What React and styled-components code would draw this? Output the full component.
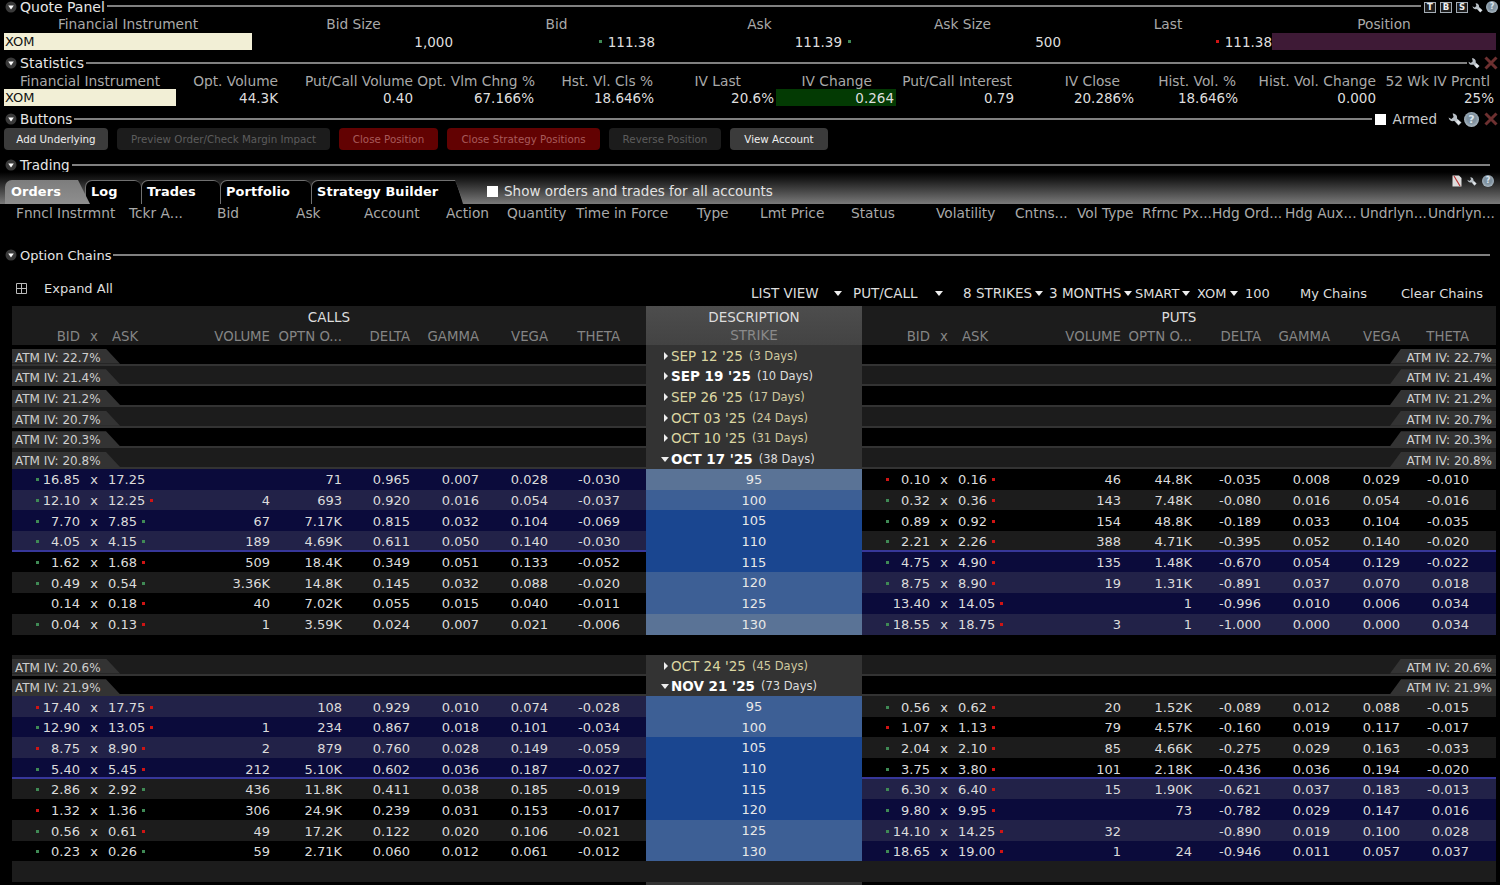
import React from "react";
import styled, { createGlobalStyle } from "styled-components";

const GlobalStyle = createGlobalStyle`
  html, body {
    margin: 0;
    background: #000;
  }
  body {
    font-family: "DejaVu Sans", "Liberation Sans", sans-serif;
    color: #ddd;
  }
`;

const Page = styled.div`
  width: 1500px;
  height: 885px;
  overflow: hidden;
  background: #000;
`;

/* section headers */
const SectionHead = styled.div`
  display: flex;
  align-items: center;
  height: 14px;
  margin-top: ${(p) => p.$mt || 0}px;
  padding: 0 2px 0 5px;
`;

const SectionTitle = styled.span`
  font-size: ${(p) => p.$fs || 14}px;
  color: #e6e6e6;
  margin-left: 3px;
  white-space: nowrap;
`;

const HeadLine = styled.div`
  flex: 1;
  height: 2px;
  margin-left: 2px;
  margin-right: ${(p) => p.$mr || 0}px;
  margin-bottom: ${(p) => p.$up || 0}px;
  background: #808080;
`;

const HeadIcons = styled.div`
  display: flex;
  align-items: center;
  gap: ${(p) => p.$gap ?? 4}px;
`;

const LetterBox = styled.span`
  width: 12px;
  height: 11px;
  margin-right: 4px;
  font-size: 8.5px;
  font-weight: 700;
  line-height: 9px;
  text-align: center;
  color: #eee;
  background: #1d1d1d;
  border: 1px solid #a4adb6;
  box-sizing: border-box;
`;

const HelpDot = styled.span`
  flex: none;
  width: ${(p) => p.$size || 13}px;
  height: ${(p) => p.$size || 13}px;
  margin-left: ${(p) => p.$ml || 0}px;
  border-radius: 50%;
  background: radial-gradient(circle at 50% 45%, #7f919f 40%, #b4c0c9 80%);
  color: #dbe5ee;
  font-size: ${(p) => Math.round((p.$size || 13) * 0.7)}px;
  font-weight: 700;
  line-height: ${(p) => p.$size || 13}px;
  text-align: center;
`;

const Disclosure = () => (
  <svg width="12" height="12" viewBox="0 0 12 12">
    <circle cx="6" cy="6" r="5.5" fill="#3a3a3a" />
    <path d="M3.2 4.4h5.6L6 8.6z" fill="#fff" />
  </svg>
);

const Wrench = ({ size = 12 }) => (
  <svg width={size} height={size} viewBox="0 0 14 14">
    <path
      d="M13.5 10.5L10.5 13.5L6.2 8.8C4 9.8 1.2 8.8 .6 5.4L3.4 7L5.6 5L4.6 1.6C7.8 1.6 9.6 4 9 6.4z"
      fill="#b9c0c6"
    />
    <path d="M12.6 10.6L10.6 12.6L8 9.8L9.9 7.9z" fill="#e4e8ec" />
  </svg>
);

const CloseX = () => (
  <svg width="14" height="14" viewBox="0 0 14 14">
    <path d="M1.5 1.5L12.5 12.5M12.5 1.5L1.5 12.5" stroke="#6d3030" strokeWidth="3" />
  </svg>
);

const PageIcon = () => (
  <svg width="10" height="12" viewBox="0 0 10 12">
    <path d="M0.5 0.5H7L9.5 3V11.5H0.5z" fill="#ddd" />
    <path d="M2 1L8 11" stroke="#b33" strokeWidth="1.2" />
  </svg>
);

/* quote + statistics tables */
const LabelRow = styled.div`
  display: grid;
  grid-template-columns: ${(p) => p.$cols};
  height: 19px;
  box-sizing: border-box;
  padding: ${(p) => p.$pt || 0}px 0 0 4px;
  align-items: center;
  font-size: 13.75px;
  color: #a9a9a9;
  white-space: nowrap;
`;

const ValueRow = styled.div`
  display: grid;
  grid-template-columns: ${(p) => p.$cols};
  height: 17px;
  padding-left: 4px;
  font-size: 13.5px;
  color: #dedede;
  white-space: nowrap;
`;

const Label = styled.span`
  text-align: ${(p) => (p.$right === undefined ? "center" : "right")};
  padding-right: ${(p) => p.$right || 0}px;
`;

const SymbolCell = styled.div`
  background: #f2efd6;
  color: #111;
  line-height: 17px;
  padding-left: 1px;
  font-size: 13px;
`;

const NumCell = styled.div`
  display: flex;
  justify-content: flex-end;
  align-items: center;
  gap: ${(p) => p.$gap || 6}px;
  padding-right: ${(p) => p.$pr ?? 2}px;
  background: ${(p) => p.$bg || "transparent"};
`;

const Tick = styled.i`
  display: block;
  flex: none;
  width: 3px;
  height: 3px;
  background: ${(p) => (p.$c === "r" ? "#d01414" : "#3f8a55")};
`;

/* buttons */
const ButtonRow = styled.div`
  display: flex;
  gap: 9px;
  height: 22px;
  margin-top: 2px;
  padding-left: 4px;
`;

const Btn = styled.button`
  width: ${(p) => p.$w}px;
  padding: 0;
  border: none;
  border-radius: 4px;
  font-family: inherit;
  font-size: 10.3px;
  background: ${(p) => (p.$kind === "red" ? "#620202" : p.$kind === "off" ? "#1c1c1c" : "#3b3b3b")};
  color: ${(p) => (p.$kind === "red" ? "#a85a5a" : p.$kind === "off" ? "#5c5c5c" : "#efefef")};
`;

const Armed = styled.label`
  display: flex;
  align-items: center;
  gap: 6px;
  margin-right: 11px;
  font-size: 13.5px;
  color: #ccc;
`;

const WhiteBox = styled.span`
  display: block;
  flex: none;
  width: 11px;
  height: 11px;
  background: #fff;
`;

/* trading tabs */
const TabBar = styled.div`
  position: relative;
  display: flex;
  align-items: flex-end;
  height: 32px;
  padding-left: 5px;
  background: linear-gradient(180deg, #000 0%, #161616 20%, #7a7a7a 100%);
`;

const Tab = styled.div`
  position: relative;
  width: ${(p) => p.$w}px;
  height: 24px;
  margin-right: ${(p) => p.$overlap || 0}px;
  padding-left: 6px;
  box-sizing: border-box;
  font-size: 12.9px;
  font-weight: 700;
  line-height: 23px;
  letter-spacing: 0.1px;
  color: #fff;
  background: ${(p) => (p.$active ? "linear-gradient(180deg, #7d7d7d, #8e8e8e)" : "#707070")};
  border-radius: 7px 7px 0 0;
  clip-path: ${(p) => p.$shape || "none"};
  z-index: ${(p) => (p.$active ? 2 : 1)};
  white-space: nowrap;

  span {
    position: relative;
    z-index: 1;
  }

  &::before {
    content: "";
    position: absolute;
    inset: 1px ${(p) => (p.$shape ? 1 : 0)}px 0 1px;
    background: ${(p) => (p.$active ? "transparent" : "#000")};
    border-radius: 6px 6px 0 0;
    clip-path: ${(p) => p.$shape || "none"};
  }
`;

const ShowOrders = styled.label`
  display: flex;
  align-items: center;
  gap: 6px;
  margin-left: 23px;
  height: 24px;
  padding-bottom: 2px;
  box-sizing: border-box;
  font-size: 13.5px;
  color: #e2e2e2;
`;

const TabIcons = styled.div`
  position: absolute;
  right: 6px;
  top: 3px;
  display: flex;
  align-items: center;
  gap: 5px;
`;

const OrderColumns = styled.div`
  display: grid;
  grid-template-columns: ${(p) => p.$cols};
  height: 18px;
  padding-left: 16px;
  align-items: center;
  font-size: 13.75px;
  color: #a9a9a9;
  white-space: nowrap;
`;

/* option chain toolbar */
const ChainBar = styled.div`
  display: flex;
  height: 32px;
  margin-top: 12px;
`;

const ExpandAll = styled.div`
  display: flex;
  align-items: center;
  gap: 17px;
  height: 28px;
  padding-left: 16px;
  font-size: 13px;
  color: #ddd;
`;

const ChainControls = styled.div`
  display: flex;
  align-items: center;
  margin-left: auto;
  height: 24px;
  margin-top: 7px;
`;

const ChainItem = styled.div`
  display: flex;
  align-items: center;
  gap: ${(p) => p.$gap || 3}px;
  width: ${(p) => p.$w}px;
  font-size: ${(p) => p.$fs || 13.5}px;
  color: #ddd;
  white-space: nowrap;
`;

const Caret = styled.i`
  width: 0;
  height: 0;
  border-left: 4px solid transparent;
  border-right: 4px solid transparent;
  border-top: 5px solid #eee;
`;

/* chain table */
const Row = styled.div`
  display: grid;
  grid-template-columns: 634px 216px 634px;
  margin-left: 12px;
  width: 1484px;
  height: ${(p) => p.$h || 20.67}px;
  box-sizing: border-box;
`;

const HeaderSide = styled.div`
  background: #1c1c1c;
  display: flex;
  flex-direction: column;
`;

const HeaderTitle = styled.div`
  height: 21px;
  line-height: 23px;
  text-align: center;
  font-size: 13.5px;
  color: #ddd;
`;

const HeaderDesc = styled.div`
  background: linear-gradient(180deg, #4d4d4d, #434343);
  text-align: center;
  font-size: 13.5px;
  color: #ddd;
`;

const StrikeLabel = styled.div`
  color: #8a8a8a;
  line-height: 16px;
`;

const Cols = styled.div`
  display: grid;
  grid-template-columns: ${(p) => p.$cols};
  align-items: center;
  height: 100%;
  padding-top: ${(p) => p.$pt || 0}px;
  font-size: ${(p) => p.$fs || 13}px;
  color: ${(p) => p.$color || "#dcdcdc"};
  white-space: nowrap;
  box-sizing: border-box;
  background: ${(p) => p.$bg || "transparent"};
  box-shadow: ${(p) => (p.$atm ? "inset 0 -2px 0 #37379a" : "none")};
`;

const Head = styled.span`
  text-align: ${(p) => p.$align || "right"};
  padding-left: ${(p) => p.$pl || 0}px;
`;

const BidCell = styled.div`
  display: flex;
  justify-content: space-between;
  align-items: center;
  padding-left: 24px;
`;

const AskCell = styled.div`
  display: flex;
  align-items: center;
  gap: 5px;
`;

const XCell = styled.span`
  text-align: center;
`;

const Num = styled.span`
  text-align: right;
`;

const AtmSide = styled.div`
  display: flex;
  align-items: flex-end;
  justify-content: ${(p) => (p.$right ? "flex-end" : "flex-start")};
  height: 100%;
  box-sizing: border-box;
  background: ${(p) => p.$bg};
  border-bottom: 2px solid #333;
`;

const AtmTag = styled.div`
  width: ${(p) => (p.$right ? 106 : 108)}px;
  height: 15px;
  box-sizing: border-box;
  padding: ${(p) => (p.$right ? "0 4px 0 0" : "0 0 0 3px")};
  background: #333;
  font-size: 12px;
  line-height: 18px;
  color: #cfcfcf;
  text-align: ${(p) => (p.$right ? "right" : "left")};
  white-space: nowrap;
  clip-path: ${(p) =>
    p.$right
      ? "polygon(11px 0, 100% 0, 100% 100%, 0 100%)"
      : "polygon(0 0, 94px 0, 100% 100%, 0 100%)"};
`;

const ExpiryCell = styled.div`
  display: flex;
  align-items: center;
  height: 100%;
  padding: 1px 0 0 ${(p) => (p.$open ? 15 : 18)}px;
  box-sizing: border-box;
  background: #333;
  color: ${(p) => (p.$bold ? "#fff" : "#dcd7a2")};
  font-size: 13.5px;
  font-weight: ${(p) => (p.$bold ? 700 : 400)};
  white-space: nowrap;

  small {
    margin-left: 6px;
    font-size: 11.5px;
    font-weight: 400;
    color: ${(p) => (p.$bold ? "#ddd" : "#cfc9a0")};
  }
`;

const ExpiryArrow = styled.i`
  flex: none;
  width: 0;
  height: 0;
  margin-right: ${(p) => (p.$open ? 2 : 3)}px;
  ${(p) =>
    p.$open
      ? "border-left: 4px solid transparent; border-right: 4px solid transparent; border-top: 5px solid #eee;"
      : "border-top: 4px solid transparent; border-bottom: 4px solid transparent; border-left: 4px solid #eee;"}
`;

const STRIKE_BG = { far: "#5a7396", mid: "#3d5f95", deep: "#1a4690" };
const SIDE_BG = { navy: "#0b0b3b", navy2: "#222248", black: "#000", gray: "#1c1c1c" };

const StrikeCell = styled.div`
  height: 100%;
  line-height: 21px;
  text-align: center;
  font-size: 13px;
  color: #e8e8e8;
  background: ${(p) => STRIKE_BG[p.$tone]};
`;

const BlankSide = styled.div`
  background: ${(p) => p.$bg || "transparent"};
`;

const QUOTE_COLS = "248px 203px 203px 203px 203px 208px 224px";
const STAT_COLS = "172px 104px 135px 121px 120px 120px 120px 120px 120px 104px 138px 118px";
const ORDER_COLS = "113px 88px 79px 68px 82px 61px 69px 121px 63px 91px 85px 79px 62px 65px 70px 73px 75px 68px 72px";
const CALL_COLS = "68px 28px 62px 100px 72px 68px 69px 69px 72px 26px";
const PUT_COLS = "68px 28px 62px 101px 71px 69px 69px 70px 69px 27px";

const STATS = [
  ["Opt. Volume", 2, "44.3K"],
  ["Put/Call Volume", 2, "0.40"],
  ["Opt. Vlm Chng %", 1, "67.166%"],
  ["Hst. Vl. Cls %", 3, "18.646%"],
  ["IV Last", 35, "20.6%"],
  ["IV Change", 24, "0.264"],
  ["Put/Call Interest", 4, "0.79"],
  ["IV Close", 16, "20.286%"],
  ["Hist. Vol. %", 4, "18.646%"],
  ["Hist. Vol. Change", 2, "0.000"],
  ["52 Wk IV Prcntl", 6, "25%"],
];

const ORDER_LABELS = [
  "Fnncl Instrmnt", "Tckr A...", "Bid", "Ask", "Account", "Action", "Quantity", "Time in Force", "Type",
  "Lmt Price", "Status", "Volatility", "Cntns...", "Vol Type", "Rfrnc Px...", "Hdg Ord...", "Hdg Aux...",
  "Undrlyn...", "Undrlyn...",
];

const expiry = (date, days, iv, bold, open) => ({ date, days, iv, bold, open });

const FIRST_EXPIRIES = [
  expiry("SEP 12 '25", "(3 Days)", "22.7%"),
  expiry("SEP 19 '25", "(10 Days)", "21.4%", true),
  expiry("SEP 26 '25", "(17 Days)", "21.2%"),
  expiry("OCT 03 '25", "(24 Days)", "20.7%"),
  expiry("OCT 10 '25", "(31 Days)", "20.3%"),
  expiry("OCT 17 '25", "(38 Days)", "20.8%", true, true),
];

const SECOND_EXPIRIES = [
  expiry("OCT 24 '25", "(45 Days)", "20.6%"),
  expiry("NOV 21 '25", "(73 Days)", "21.9%", true, true),
];

// [bid tick, bid, ask, ask tick, volume, open interest, delta, gamma, vega, theta]
const OCT_ROWS = [
  { strike: 95, tone: "far", call: ["g", "16.85", "17.25", "", "", "71", "0.965", "0.007", "0.028", "-0.030"], put: ["r", "0.10", "0.16", "r", "46", "44.8K", "-0.035", "0.008", "0.029", "-0.010"] },
  { strike: 100, tone: "mid", call: ["g", "12.10", "12.25", "r", "4", "693", "0.920", "0.016", "0.054", "-0.037"], put: ["g", "0.32", "0.36", "r", "143", "7.48K", "-0.080", "0.016", "0.054", "-0.016"] },
  { strike: 105, tone: "deep", call: ["g", "7.70", "7.85", "g", "67", "7.17K", "0.815", "0.032", "0.104", "-0.069"], put: ["g", "0.89", "0.92", "r", "154", "48.8K", "-0.189", "0.033", "0.104", "-0.035"] },
  { strike: 110, tone: "deep", atm: true, call: ["g", "4.05", "4.15", "g", "189", "4.69K", "0.611", "0.050", "0.140", "-0.030"], put: ["g", "2.21", "2.26", "r", "388", "4.71K", "-0.395", "0.052", "0.140", "-0.020"] },
  { strike: 115, tone: "deep", call: ["g", "1.62", "1.68", "r", "509", "18.4K", "0.349", "0.051", "0.133", "-0.052"], put: ["g", "4.75", "4.90", "r", "135", "1.48K", "-0.670", "0.054", "0.129", "-0.022"] },
  { strike: 120, tone: "mid", call: ["g", "0.49", "0.54", "g", "3.36K", "14.8K", "0.145", "0.032", "0.088", "-0.020"], put: ["g", "8.75", "8.90", "r", "19", "1.31K", "-0.891", "0.037", "0.070", "0.018"] },
  { strike: 125, tone: "mid", call: ["", "0.14", "0.18", "r", "40", "7.02K", "0.055", "0.015", "0.040", "-0.011"], put: ["", "13.40", "14.05", "r", "", "1", "-0.996", "0.010", "0.006", "0.034"] },
  { strike: 130, tone: "far", call: ["g", "0.04", "0.13", "r", "1", "3.59K", "0.024", "0.007", "0.021", "-0.006"], put: ["g", "18.55", "18.75", "r", "3", "1", "-1.000", "0.000", "0.000", "0.034"] },
];

const NOV_ROWS = [
  { strike: 95, tone: "mid", call: ["r", "17.40", "17.75", "r", "", "108", "0.929", "0.010", "0.074", "-0.028"], put: ["g", "0.56", "0.62", "r", "20", "1.52K", "-0.089", "0.012", "0.088", "-0.015"] },
  { strike: 100, tone: "mid", call: ["g", "12.90", "13.05", "r", "1", "234", "0.867", "0.018", "0.101", "-0.034"], put: ["r", "1.07", "1.13", "r", "79", "4.57K", "-0.160", "0.019", "0.117", "-0.017"] },
  { strike: 105, tone: "deep", call: ["r", "8.75", "8.90", "r", "2", "879", "0.760", "0.028", "0.149", "-0.059"], put: ["g", "2.04", "2.10", "r", "85", "4.66K", "-0.275", "0.029", "0.163", "-0.033"] },
  { strike: 110, tone: "deep", atm: true, call: ["g", "5.40", "5.45", "r", "212", "5.10K", "0.602", "0.036", "0.187", "-0.027"], put: ["g", "3.75", "3.80", "r", "101", "2.18K", "-0.436", "0.036", "0.194", "-0.020"] },
  { strike: 115, tone: "deep", call: ["g", "2.86", "2.92", "g", "436", "11.8K", "0.411", "0.038", "0.185", "-0.019"], put: ["g", "6.30", "6.40", "r", "15", "1.90K", "-0.621", "0.037", "0.183", "-0.013"] },
  { strike: 120, tone: "deep", call: ["r", "1.32", "1.36", "g", "306", "24.9K", "0.239", "0.031", "0.153", "-0.017"], put: ["g", "9.80", "9.95", "r", "", "73", "-0.782", "0.029", "0.147", "0.016"] },
  { strike: 125, tone: "mid", call: ["g", "0.56", "0.61", "r", "49", "17.2K", "0.122", "0.020", "0.106", "-0.021"], put: ["g", "14.10", "14.25", "r", "32", "", "-0.890", "0.019", "0.100", "0.028"] },
  { strike: 130, tone: "mid", call: ["g", "0.23", "0.26", "g", "59", "2.71K", "0.060", "0.012", "0.061", "-0.012"], put: ["g", "18.65", "19.00", "r", "1", "24", "-0.946", "0.011", "0.057", "0.037"] },
];

const Side = ({ cols, bg, atm, data }) => {
  const [bt, bid, ask, at, ...rest] = data;
  return (
    <Cols $cols={cols} $bg={bg} $atm={atm} $pt={1}>
      <BidCell>
        {bt ? <Tick $c={bt} /> : <span />}
        <span>{bid}</span>
      </BidCell>
      <XCell>x</XCell>
      <AskCell>
        <span>{ask}</span>
        {at && <Tick $c={at} />}
      </AskCell>
      {rest.map((v, i) => (
        <Num key={i}>{v}</Num>
      ))}
    </Cols>
  );
};

const HeaderCols = ({ cols }) => (
  <Cols $cols={cols} $fs={13.3} $color="#858585">
    <Head>BID</Head>
    <XCell>x</XCell>
    <Head $align="left" $pl={4}>ASK</Head>
    <Head>VOLUME</Head>
    <Head>OPTN O...</Head>
    <Head>DELTA</Head>
    <Head>GAMMA</Head>
    <Head>VEGA</Head>
    <Head>THETA</Head>
  </Cols>
);

const ExpiryRows = ({ items, startDark }) =>
  items.map((e, i) => {
    const bg = (i % 2 === 0) === startDark ? SIDE_BG.black : SIDE_BG.gray;
    return (
      <Row key={e.date}>
        <AtmSide $bg={bg}>
          <AtmTag>ATM IV: {e.iv}</AtmTag>
        </AtmSide>
        <ExpiryCell $bold={e.bold} $open={e.open}>
          <ExpiryArrow $open={e.open} />
          {e.date}
          <small>{e.days}</small>
        </ExpiryCell>
        <AtmSide $bg={bg} $right>
          <AtmTag $right>ATM IV: {e.iv}</AtmTag>
        </AtmSide>
      </Row>
    );
  });

const StrikeRows = ({ rows, flip }) =>
  rows.map((r, i) => {
    const odd = (i % 2 === 1) !== flip;
    const itm = i < 4;
    const navy = odd ? SIDE_BG.navy2 : SIDE_BG.navy;
    const plain = odd ? SIDE_BG.gray : SIDE_BG.black;
    return (
      <Row key={r.strike}>
        <Side cols={CALL_COLS} bg={itm ? navy : plain} atm={r.atm} data={r.call} />
        <StrikeCell $tone={r.tone}>{r.strike}</StrikeCell>
        <Side cols={PUT_COLS} bg={itm ? plain : navy} atm={r.atm} data={r.put} />
      </Row>
    );
  });

export default function App() {
  return (
    <Page>
      <GlobalStyle />

      <SectionHead>
        <Disclosure />
        <SectionTitle>Quote Panel</SectionTitle>
        <HeadLine $mr={3} $up={3} />
        <HeadIcons $gap={0}>
          <LetterBox>T</LetterBox>
          <LetterBox>B</LetterBox>
          <LetterBox>S</LetterBox>
          <Wrench size={11} />
          <HelpDot $size={12} $ml={3}>?</HelpDot>
        </HeadIcons>
      </SectionHead>
      <LabelRow $cols={QUOTE_COLS} $pt={1}>
        {["Financial Instrument", "Bid Size", "Bid", "Ask", "Ask Size", "Last", "Position"].map((l) => (
          <Label key={l}>{l}</Label>
        ))}
      </LabelRow>
      <ValueRow $cols={QUOTE_COLS}>
        <SymbolCell>XOM</SymbolCell>
        <NumCell>1,000</NumCell>
        <NumCell $pr={3}>
          <Tick $c="g" />
          111.38
        </NumCell>
        <NumCell $pr={10}>
          111.39
          <Tick $c="g" />
        </NumCell>
        <NumCell $pr={3}>500</NumCell>
        <NumCell $pr={0}>
          <Tick $c="r" />
          111.38
        </NumCell>
        <NumCell $bg="#3e1a36" />
      </ValueRow>

      <SectionHead $mt={6}>
        <Disclosure />
        <SectionTitle>Statistics</SectionTitle>
        <HeadLine $mr={1} />
        <HeadIcons>
          <Wrench size={12} />
          <CloseX />
        </HeadIcons>
      </SectionHead>
      <LabelRow $cols={STAT_COLS} $pt={2}>
        <Label>Financial Instrument</Label>
        {STATS.map(([l, pad]) => (
          <Label key={l} $right={pad}>{l}</Label>
        ))}
      </LabelRow>
      <ValueRow $cols={STAT_COLS}>
        <SymbolCell>XOM</SymbolCell>
        {STATS.map(([l, , v]) => (
          <NumCell key={l} $bg={l === "IV Change" ? "#033a03" : undefined}>{v}</NumCell>
        ))}
      </ValueRow>

      <SectionHead $mt={6}>
        <Disclosure />
        <SectionTitle $fs={13.5}>Buttons</SectionTitle>
        <HeadLine $mr={3} />
        <Armed>
          <WhiteBox />
          Armed
        </Armed>
        <HeadIcons $gap={2}>
          <Wrench size={14} />
          <HelpDot $size={15}>?</HelpDot>
          <span style={{ width: 1 }} />
          <CloseX />
        </HeadIcons>
      </SectionHead>
      <ButtonRow>
        <Btn $w={104}>Add Underlying</Btn>
        <Btn $w={213} $kind="off">Preview Order/Check Margin Impact</Btn>
        <Btn $w={99} $kind="red">Close Position</Btn>
        <Btn $w={153} $kind="red">Close Strategy Positions</Btn>
        <Btn $w={112} $kind="off">Reverse Position</Btn>
        <Btn $w={98}>View Account</Btn>
      </ButtonRow>

      <SectionHead $mt={8}>
        <Disclosure />
        <SectionTitle $fs={13.5}>Trading</SectionTitle>
        <HeadLine $mr={8} />
      </SectionHead>
      <TabBar>
        <Tab $active $w={85} $overlap={-5} $shape="polygon(0 0, 73px 0, 100% 100%, 0 100%)"><span>Orders</span></Tab>
        <Tab $w={56}><span>Log</span></Tab>
        <Tab $w={79}><span>Trades</span></Tab>
        <Tab $w={91}><span>Portfolio</span></Tab>
        <Tab $w={153} $shape="polygon(0 0, 144px 0, 100% 100%, 0 100%)"><span>Strategy Builder</span></Tab>
        <ShowOrders>
          <WhiteBox />
          Show orders and trades for all accounts
        </ShowOrders>
        <TabIcons>
          <PageIcon />
          <Wrench size={10} />
          <HelpDot $size={12}>?</HelpDot>
        </TabIcons>
      </TabBar>
      <OrderColumns $cols={ORDER_COLS}>
        {ORDER_LABELS.map((l, i) => (
          <span key={i}>{l}</span>
        ))}
      </OrderColumns>

      <SectionHead $mt={26}>
        <Disclosure />
        <SectionTitle $fs={13}>Option Chains</SectionTitle>
        <HeadLine $mr={8} />
      </SectionHead>
      <ChainBar>
        <ExpandAll>
          <svg width="11" height="11" viewBox="0 0 11 11">
            <path d="M0.5 0.5H10.5V10.5H0.5zM5.5 0.5V10.5M0.5 5.5H10.5" fill="none" stroke="#bbb" />
          </svg>
          Expand All
        </ExpandAll>
        <ChainControls>
          <ChainItem $w={102} $gap={15}>LIST VIEW<Caret /></ChainItem>
          <ChainItem $w={110} $gap={17}>PUT/CALL<Caret /></ChainItem>
          <ChainItem $w={86}>8 STRIKES<Caret /></ChainItem>
          <ChainItem $w={86}>3 MONTHS<Caret /></ChainItem>
          <ChainItem $w={62} $fs={13}>SMART<Caret /></ChainItem>
          <ChainItem $w={48} $fs={13}>XOM<Caret /></ChainItem>
          <ChainItem $w={55} $fs={13}>100</ChainItem>
          <ChainItem $w={101} $fs={13}>My Chains</ChainItem>
          <ChainItem $w={99} $fs={13}>Clear Chains</ChainItem>
        </ChainControls>
      </ChainBar>

      <Row $h={39}>
        <HeaderSide>
          <HeaderTitle>CALLS</HeaderTitle>
          <HeaderCols cols={CALL_COLS} />
        </HeaderSide>
        <HeaderDesc>
          <HeaderTitle>DESCRIPTION</HeaderTitle>
          <StrikeLabel>STRIKE</StrikeLabel>
        </HeaderDesc>
        <HeaderSide>
          <HeaderTitle>PUTS</HeaderTitle>
          <HeaderCols cols={PUT_COLS} />
        </HeaderSide>
      </Row>

      <ExpiryRows items={FIRST_EXPIRIES} startDark />
      <StrikeRows rows={OCT_ROWS} flip={false} />
      <Row />
      <ExpiryRows items={SECOND_EXPIRIES} startDark={false} />
      <StrikeRows rows={NOV_ROWS} flip />
      <Row>
        <BlankSide $bg="#1c1c1c" />
        <BlankSide $bg="#1c1c1c" />
        <BlankSide $bg="#1c1c1c" />
      </Row>
      <Row>
        <BlankSide />
        <BlankSide $bg="#333" />
        <BlankSide />
      </Row>
    </Page>
  );
}
